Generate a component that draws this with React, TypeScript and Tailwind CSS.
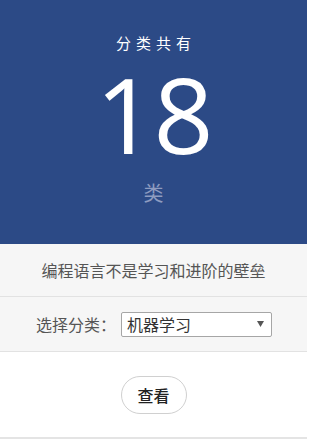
import React from "react";

export default function App() {
  return (
    <div className="w-[307px] h-[441px] overflow-hidden bg-white flex flex-col font-['Noto_Sans_CJK_SC',sans-serif]">
      <div className="h-[244px] shrink-0 bg-[#2c4a86] flex flex-col items-center">
        <div className="mt-[33px] text-[15px] leading-[20px] tracking-[5px] pl-[5px] text-white">分类共有</div>
        <div className="mt-[13px] text-[105px] leading-[96px] text-white font-['Open_Sans',sans-serif] font-normal tracking-[-2px]">
          18
        </div>
        <div className="mt-[19px] text-[20px] leading-[24px] text-[#8e9cc0]">类</div>
      </div>
      <div className="h-[53px] shrink-0 bg-[#f6f6f6] border-b border-[#e2e2e2] flex items-center justify-center text-[16px] text-[#555]">
        编程语言不是学习和进阶的壁垒
      </div>
      <div className="h-[55px] shrink-0 bg-[#f6f6f6] border-b border-[#e2e2e2] flex items-center pl-[36px] text-[16px] text-[#555]">
        <span>选择分类：</span>
        <div className="ml-[5px] w-[151px] h-[25px] bg-white border border-[#a6a6a6] rounded-[2px] flex items-center justify-between pl-[5px] pr-[7px] text-[#333]">
          <span className="text-[16px] leading-[20px]">机器学习</span>
          <svg width="7" height="6" viewBox="0 0 7 6">
            <path d="M0 0 H7 L3.5 6 Z" fill="#555" />
          </svg>
        </div>
      </div>
      <div className="h-[87px] shrink-0 border-b-2 border-[#e4e4e4] flex items-center justify-center">
        <div className="w-[66px] h-[38px] rounded-full border border-[#d0d0d0] bg-white flex items-center justify-center text-[16px] font-medium text-[#222]">
          查看
        </div>
      </div>
    </div>
  );
}
